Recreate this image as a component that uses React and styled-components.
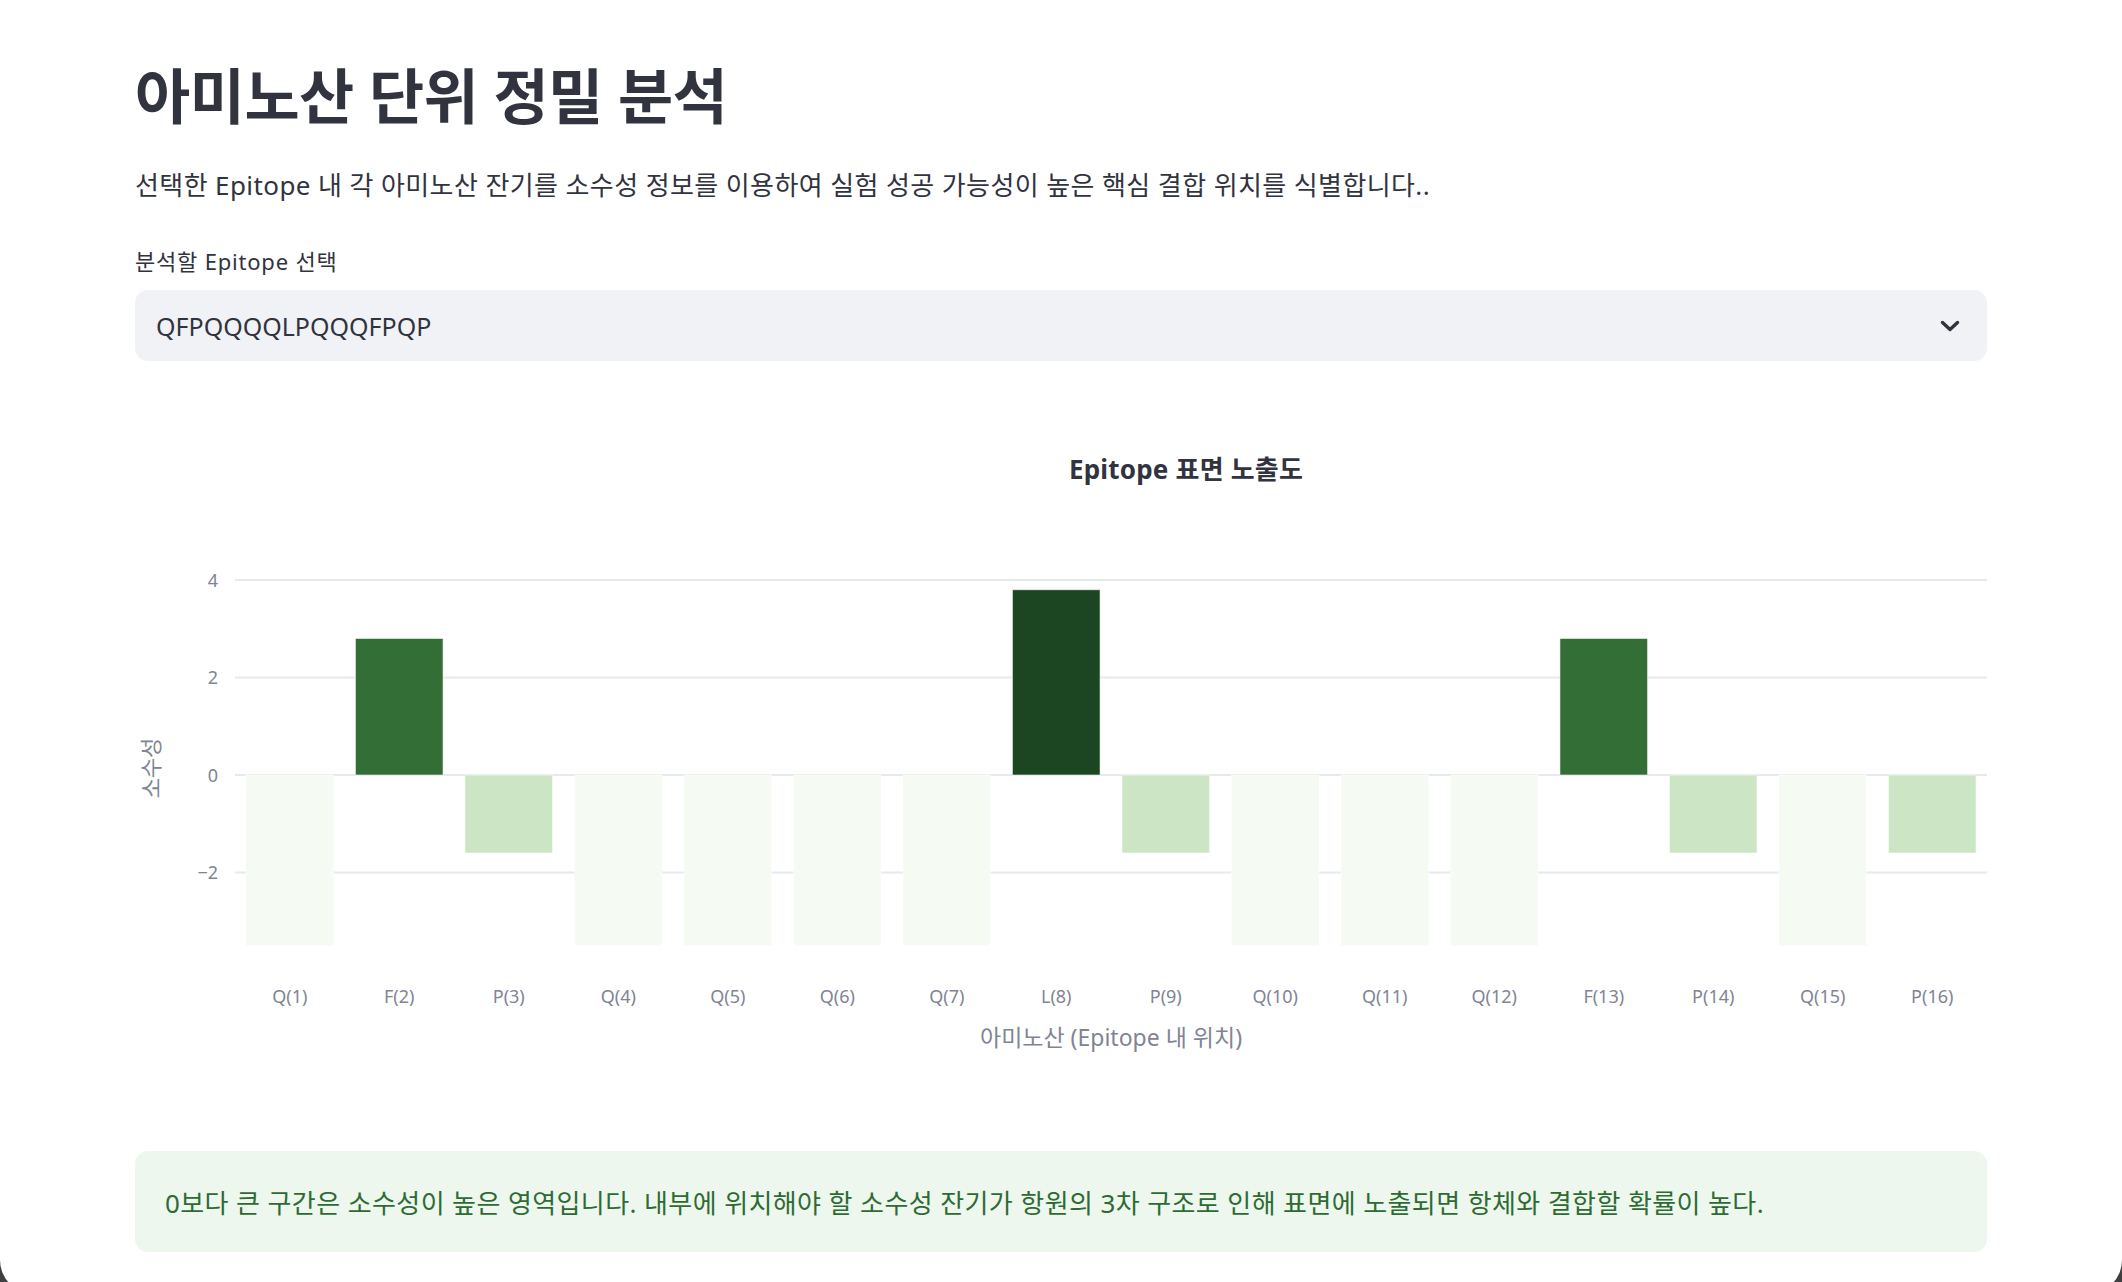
import React from "react";
import styled, { createGlobalStyle } from "styled-components";

// Styles globaux de la page
const GlobalStyle = createGlobalStyle`
    html, body {
        margin: 0;
        padding: 0;
        background: #3f3f41;
    }
    * {
        box-sizing: border-box;
    }
`;

const colors = {
    text: "#31333f",
    muted: "#808495",
    grid: "#e6e9ef",
    selectBg: "#f0f2f6",
    successBg: "#edf7ee",
    successText: "#2e6b34",
};

const FONT = `"Noto Sans", "Noto Sans CJK KR", sans-serif`;

// Données : échelle de Kyte-Doolittle
const HYDRO = { Q: -3.5, F: 2.8, P: -1.6, L: 3.8 };
const BAR_COLORS = { Q: "#f5faf3", F: "#326e35", P: "#cce6c5", L: "#1c4521" };
const EPITOPE = "QFPQQQQLPQQQFPQP";

const Window = styled.div`
    min-height: 1294px;
    background: #ffffff;
    border-radius: 0 0 34px 34px;
    overflow: hidden;
    font-family: ${FONT};
    color: ${colors.text};
`;

const Main = styled.main`
    display: flex;
    flex-direction: column;
    padding: 62px 135px 0;
`;

const Title = styled.h1`
    margin: 0;
    font-size: 60px;
    line-height: 68px;
    font-weight: 700;
    letter-spacing: -0.5px;
`;

const Description = styled.p`
    margin: 37px 0 0;
    font-size: 26px;
    line-height: 37px;
    letter-spacing: 0.4px;
`;

const Label = styled.label`
    margin-top: 42px;
    font-size: 22px;
    line-height: 31px;
    letter-spacing: 0.8px;
`;

const SelectBox = styled.div`
    margin-top: 13px;
    height: 71px;
    display: flex;
    align-items: center;
    justify-content: space-between;
    padding: 0 27px 0 21px;
    background: ${colors.selectBg};
    border-radius: 13px;
    font-size: 25px;
`;

const ChartFrame = styled.div`
    margin-top: 18px;
    height: 760px;
`;

const ChartSvg = styled.svg`
    display: block;
    width: 100%;
    height: 100%;
    font-family: ${FONT};
`;

const InfoBox = styled.div`
    margin-top: 12px;
    height: 101px;
    display: flex;
    align-items: center;
    padding: 0 30px;
    background: ${colors.successBg};
    border-radius: 13px;
    color: ${colors.successText};
    font-size: 26px;
    letter-spacing: 0.4px;
`;

function Chevron() {
    return (
        <svg width="20" height="12" viewBox="0 0 20 12">
            <path d="M2.5 2.5 L10 9.5 L17.5 2.5" fill="none" stroke={colors.text} strokeWidth="3.4" strokeLinecap="round" strokeLinejoin="round" />
        </svg>
    );
}

function HydroChart() {
    const W = 1852;
    const x0 = 100;
    const slot = (W - x0) / EPITOPE.length;
    const barW = slot * 0.8;
    const zeroY = 396;
    const unit = 48.75;
    const yOf = (v) => zeroY - v * unit;
    const ticks = [4, 2, 0, -2];

    return (
        <ChartSvg viewBox="0 0 1852 760">
            <text x="1051" y="100" textAnchor="middle" fontSize="26" fontWeight="700" letterSpacing="0.2" fill={colors.text}>
                Epitope 표면 노출도
            </text>
            {ticks.map((t) => (
                <g key={t}>
                    <line x1={x0} x2={W} y1={yOf(t)} y2={yOf(t)} stroke={colors.grid} strokeWidth="2" />
                    <text x="83" y={yOf(t) + 6.5} textAnchor="end" fontSize="18" fill={colors.muted}>
                        {t < 0 ? `\u2212${Math.abs(t)}` : t}
                    </text>
                </g>
            ))}
            {EPITOPE.split("").map((aa, i) => {
                const v = HYDRO[aa];
                const left = x0 + i * slot + (slot - barW) / 2;
                const top = v > 0 ? yOf(v) : zeroY;
                const h = Math.abs(v) * unit;
                return (
                    <g key={i}>
                        <rect x={left} y={top} width={barW} height={h} fill={BAR_COLORS[aa]} stroke="rgba(255,255,255,0.55)" strokeWidth="1" />
                        <text x={x0 + i * slot + slot / 2} y="624" textAnchor="middle" fontSize="18" fill={colors.muted}>
                            {`${aa}(${i + 1})`}
                        </text>
                    </g>
                );
            })}
            <text x="976" y="667" textAnchor="middle" fontSize="23" fill={colors.muted}>
                아미노산 (Epitope 내 위치)
            </text>
            <text x="24" y="389" textAnchor="middle" fontSize="22" fill={colors.muted} transform="rotate(-90 24 389)">
                소수성
            </text>
        </ChartSvg>
    );
}

export default function App() {
    return (
        <>
            <GlobalStyle />
            <Window>
                <Main>
                    <Title>아미노산 단위 정밀 분석</Title>
                    <Description>
                        선택한 Epitope 내 각 아미노산 잔기를 소수성 정보를 이용하여 실험 성공 가능성이 높은 핵심 결합 위치를 식별합니다..
                    </Description>
                    <Label>분석할 Epitope 선택</Label>
                    <SelectBox>
                        <span>{EPITOPE}</span>
                        <Chevron />
                    </SelectBox>
                    <ChartFrame>
                        <HydroChart />
                    </ChartFrame>
                    <InfoBox>
                        0보다 큰 구간은 소수성이 높은 영역입니다. 내부에 위치해야 할 소수성 잔기가 항원의 3차 구조로 인해 표면에 노출되면 항체와 결합할 확률이 높다.
                    </InfoBox>
                </Main>
            </Window>
        </>
    );
}
